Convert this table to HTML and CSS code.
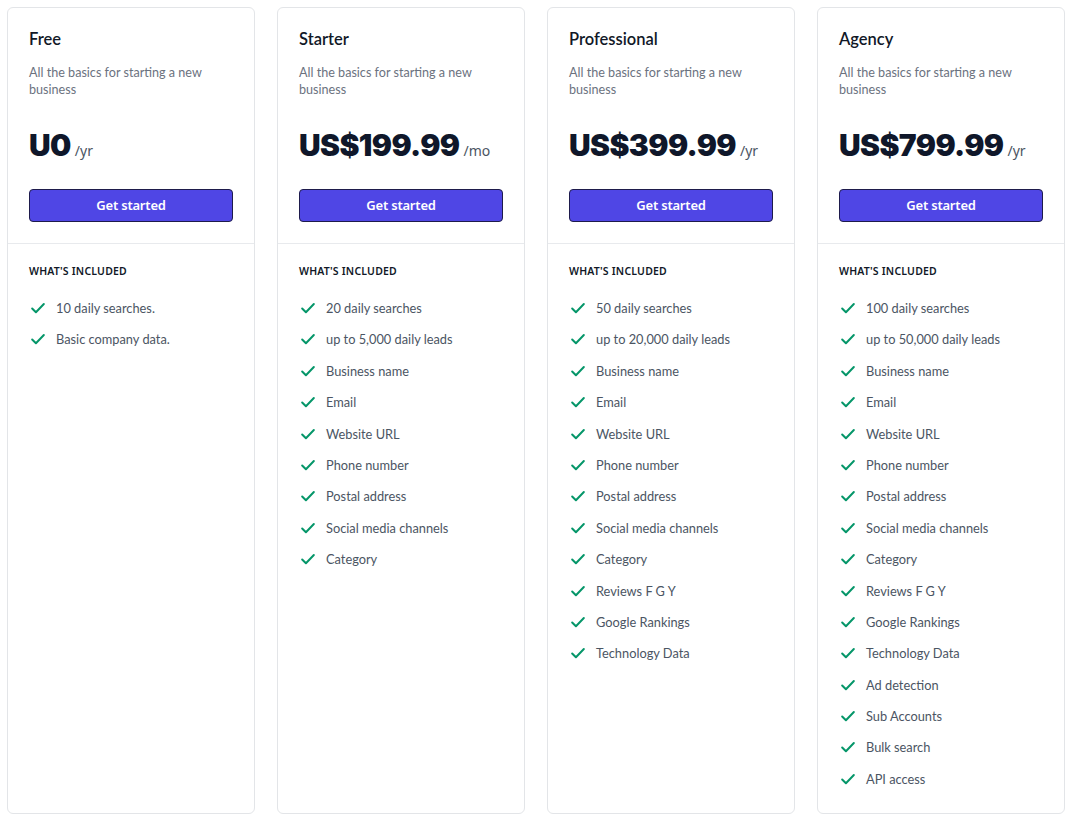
FILE: index.html
```html
<!DOCTYPE html>
<html>
<head>
<meta charset="utf-8">
<link rel="stylesheet" href="styles.css">
</head>
<body>
<div class="plans">
  <div class="card">
    <div class="head">
      <h2 class="name">Free</h2>
      <p class="desc">All the basics for starting a new business</p>
      <p class="price"><span class="amount">U0</span> <span class="per">/yr</span></p>
      <a class="btn">Get started</a>
    </div>
    <div class="features">
      <h3 class="inc">What's included</h3>
      <ul class="list">
        <li><svg class="chk" viewBox="0 0 20 20"><path d="M3.5 10.5l4.2 4.2 8.8-9.2"/></svg>10 daily searches.</li>
        <li><svg class="chk" viewBox="0 0 20 20"><path d="M3.5 10.5l4.2 4.2 8.8-9.2"/></svg>Basic company data.</li>
      </ul>
    </div>
  </div>

  <div class="card">
    <div class="head">
      <h2 class="name">Starter</h2>
      <p class="desc">All the basics for starting a new business</p>
      <p class="price"><span class="amount">US$199.99</span> <span class="per">/mo</span></p>
      <a class="btn">Get started</a>
    </div>
    <div class="features">
      <h3 class="inc">What's included</h3>
      <ul class="list">
        <li><svg class="chk" viewBox="0 0 20 20"><path d="M3.5 10.5l4.2 4.2 8.8-9.2"/></svg>20 daily searches</li>
        <li><svg class="chk" viewBox="0 0 20 20"><path d="M3.5 10.5l4.2 4.2 8.8-9.2"/></svg>up to 5,000 daily leads</li>
        <li><svg class="chk" viewBox="0 0 20 20"><path d="M3.5 10.5l4.2 4.2 8.8-9.2"/></svg>Business name</li>
        <li><svg class="chk" viewBox="0 0 20 20"><path d="M3.5 10.5l4.2 4.2 8.8-9.2"/></svg>Email</li>
        <li><svg class="chk" viewBox="0 0 20 20"><path d="M3.5 10.5l4.2 4.2 8.8-9.2"/></svg>Website URL</li>
        <li><svg class="chk" viewBox="0 0 20 20"><path d="M3.5 10.5l4.2 4.2 8.8-9.2"/></svg>Phone number</li>
        <li><svg class="chk" viewBox="0 0 20 20"><path d="M3.5 10.5l4.2 4.2 8.8-9.2"/></svg>Postal address</li>
        <li><svg class="chk" viewBox="0 0 20 20"><path d="M3.5 10.5l4.2 4.2 8.8-9.2"/></svg>Social media channels</li>
        <li><svg class="chk" viewBox="0 0 20 20"><path d="M3.5 10.5l4.2 4.2 8.8-9.2"/></svg>Category</li>
      </ul>
    </div>
  </div>

  <div class="card">
    <div class="head">
      <h2 class="name">Professional</h2>
      <p class="desc">All the basics for starting a new business</p>
      <p class="price"><span class="amount">US$399.99</span> <span class="per">/yr</span></p>
      <a class="btn">Get started</a>
    </div>
    <div class="features">
      <h3 class="inc">What's included</h3>
      <ul class="list">
        <li><svg class="chk" viewBox="0 0 20 20"><path d="M3.5 10.5l4.2 4.2 8.8-9.2"/></svg>50 daily searches</li>
        <li><svg class="chk" viewBox="0 0 20 20"><path d="M3.5 10.5l4.2 4.2 8.8-9.2"/></svg>up to 20,000 daily leads</li>
        <li><svg class="chk" viewBox="0 0 20 20"><path d="M3.5 10.5l4.2 4.2 8.8-9.2"/></svg>Business name</li>
        <li><svg class="chk" viewBox="0 0 20 20"><path d="M3.5 10.5l4.2 4.2 8.8-9.2"/></svg>Email</li>
        <li><svg class="chk" viewBox="0 0 20 20"><path d="M3.5 10.5l4.2 4.2 8.8-9.2"/></svg>Website URL</li>
        <li><svg class="chk" viewBox="0 0 20 20"><path d="M3.5 10.5l4.2 4.2 8.8-9.2"/></svg>Phone number</li>
        <li><svg class="chk" viewBox="0 0 20 20"><path d="M3.5 10.5l4.2 4.2 8.8-9.2"/></svg>Postal address</li>
        <li><svg class="chk" viewBox="0 0 20 20"><path d="M3.5 10.5l4.2 4.2 8.8-9.2"/></svg>Social media channels</li>
        <li><svg class="chk" viewBox="0 0 20 20"><path d="M3.5 10.5l4.2 4.2 8.8-9.2"/></svg>Category</li>
        <li><svg class="chk" viewBox="0 0 20 20"><path d="M3.5 10.5l4.2 4.2 8.8-9.2"/></svg>Reviews F G Y</li>
        <li><svg class="chk" viewBox="0 0 20 20"><path d="M3.5 10.5l4.2 4.2 8.8-9.2"/></svg>Google Rankings</li>
        <li><svg class="chk" viewBox="0 0 20 20"><path d="M3.5 10.5l4.2 4.2 8.8-9.2"/></svg>Technology Data</li>
      </ul>
    </div>
  </div>

  <div class="card">
    <div class="head">
      <h2 class="name">Agency</h2>
      <p class="desc">All the basics for starting a new business</p>
      <p class="price"><span class="amount">US$799.99</span> <span class="per">/yr</span></p>
      <a class="btn">Get started</a>
    </div>
    <div class="features">
      <h3 class="inc">What's included</h3>
      <ul class="list">
        <li><svg class="chk" viewBox="0 0 20 20"><path d="M3.5 10.5l4.2 4.2 8.8-9.2"/></svg>100 daily searches</li>
        <li><svg class="chk" viewBox="0 0 20 20"><path d="M3.5 10.5l4.2 4.2 8.8-9.2"/></svg>up to 50,000 daily leads</li>
        <li><svg class="chk" viewBox="0 0 20 20"><path d="M3.5 10.5l4.2 4.2 8.8-9.2"/></svg>Business name</li>
        <li><svg class="chk" viewBox="0 0 20 20"><path d="M3.5 10.5l4.2 4.2 8.8-9.2"/></svg>Email</li>
        <li><svg class="chk" viewBox="0 0 20 20"><path d="M3.5 10.5l4.2 4.2 8.8-9.2"/></svg>Website URL</li>
        <li><svg class="chk" viewBox="0 0 20 20"><path d="M3.5 10.5l4.2 4.2 8.8-9.2"/></svg>Phone number</li>
        <li><svg class="chk" viewBox="0 0 20 20"><path d="M3.5 10.5l4.2 4.2 8.8-9.2"/></svg>Postal address</li>
        <li><svg class="chk" viewBox="0 0 20 20"><path d="M3.5 10.5l4.2 4.2 8.8-9.2"/></svg>Social media channels</li>
        <li><svg class="chk" viewBox="0 0 20 20"><path d="M3.5 10.5l4.2 4.2 8.8-9.2"/></svg>Category</li>
        <li><svg class="chk" viewBox="0 0 20 20"><path d="M3.5 10.5l4.2 4.2 8.8-9.2"/></svg>Reviews F G Y</li>
        <li><svg class="chk" viewBox="0 0 20 20"><path d="M3.5 10.5l4.2 4.2 8.8-9.2"/></svg>Google Rankings</li>
        <li><svg class="chk" viewBox="0 0 20 20"><path d="M3.5 10.5l4.2 4.2 8.8-9.2"/></svg>Technology Data</li>
        <li><svg class="chk" viewBox="0 0 20 20"><path d="M3.5 10.5l4.2 4.2 8.8-9.2"/></svg>Ad detection</li>
        <li><svg class="chk" viewBox="0 0 20 20"><path d="M3.5 10.5l4.2 4.2 8.8-9.2"/></svg>Sub Accounts</li>
        <li><svg class="chk" viewBox="0 0 20 20"><path d="M3.5 10.5l4.2 4.2 8.8-9.2"/></svg>Bulk search</li>
        <li><svg class="chk" viewBox="0 0 20 20"><path d="M3.5 10.5l4.2 4.2 8.8-9.2"/></svg>API access</li>
      </ul>
    </div>
  </div>
</div>
</body>
</html>
```
FILE: styles.css
```css
* { box-sizing: border-box; }
html, body { margin: 0; background: #ffffff; }
body {
  padding: 7px 5px 6px 7px;
  font-family: "Lato", "Noto Sans", "Liberation Sans", sans-serif;
  color: #111827;
}
.plans {
  display: grid;
  grid-template-columns: repeat(4, 248px);
  column-gap: 22px;
  height: 807px;
}
.card {
  border: 1px solid #e3e5e8;
  border-radius: 6px;
  background: #fff;
  display: flex;
  flex-direction: column;
}
.head {
  padding: 20px 21px 21px 21px;
  border-bottom: 1px solid #e8eaed;
}
.name {
  margin: 0;
  font-size: 16.5px;
  line-height: 22px;
  font-weight: 600;
  color: #111827;
}
.desc {
  margin: 14px 0 0;
  font-size: 12.6px;
  line-height: 17px;
  color: #6b7280;
  padding-right: 20px;
}
.price {
  margin: 27px 0 0;
  line-height: 40px;
  display: flex;
  align-items: baseline;
  gap: 4px;
}
.amount {
  font-family: "Inter", "Noto Sans", sans-serif;
  font-size: 30px;
  font-weight: 900;
  letter-spacing: -0.6px;
  color: #0f172a;
}
.per {
  font-family: "Noto Sans", sans-serif;
  font-size: 14px;
  color: #4b5563;
}
.btn {
  display: block;
  margin-top: 18px;
  height: 33px;
  line-height: 31px;
  text-align: center;
  background: #4f46e5;
  border: 1px solid #1e1b4b;
  border-radius: 4px;
  color: #fff;
  font-family: "Noto Sans", sans-serif;
  font-size: 13px;
  font-weight: 600;
  letter-spacing: -0.2px;
}
.features {
  padding: 19px 21px 20px 21px;
}
.inc {
  margin: 0;
  font-family: "Noto Sans", sans-serif;
  font-size: 10.5px;
  line-height: 16px;
  font-weight: 600;
  letter-spacing: 0.2px;
  text-transform: uppercase;
  color: #111827;
}
.list {
  list-style: none;
  margin: 19px 0 0;
  padding: 0;
  display: flex;
  flex-direction: column;
  gap: 11.4px;
}
.list li {
  display: flex;
  align-items: center;
  font-size: 12.8px;
  line-height: 20px;
  color: #4b5563;
}
.chk {
  width: 18px;
  height: 18px;
  margin-left: 0;
  margin-right: 9px;
  flex: none;
  fill: none;
  stroke: #059669;
  stroke-width: 2.2;
  stroke-linecap: round;
  stroke-linejoin: round;
}
```
